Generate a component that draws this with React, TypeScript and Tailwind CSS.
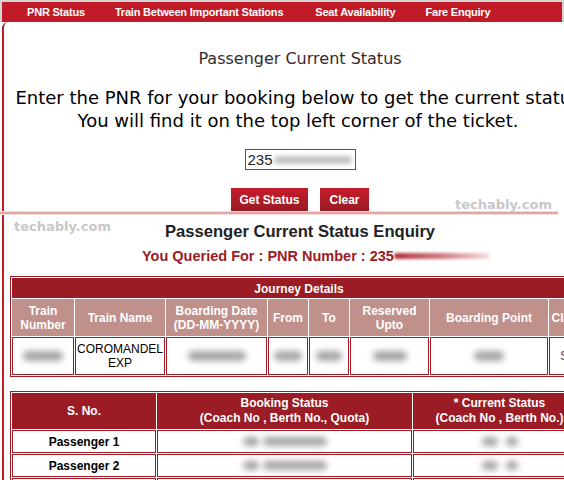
import React from "react";

const ARIAL = "font-['Liberation_Sans',Arial,sans-serif]";
const VERD = "font-['DejaVu_Sans',Verdana,sans-serif]";

function Blob({ w, h = "h-[10px]", c = "bg-[#a4a4a4]" }: { w: string; h?: string; c?: string }) {
  return <span className={`inline-block ${w} ${h} ${c} rounded-full blur-[3px]`} />;
}

function HeadCell({ w, children }: { w: string; children: React.ReactNode }) {
  return (
    <div className={`${w} shrink-0 bg-[#c0908b] text-white font-bold text-[12px] leading-[14px] flex items-center justify-center text-center`}>
      {children}
    </div>
  );
}

function DataCell({ w, children }: { w: string; children?: React.ReactNode }) {
  return (
    <div className={`${w} shrink-0 border border-[#9b1c24] bg-white flex items-center justify-center text-center text-[12px] leading-[14px] text-black`}>
      {children}
    </div>
  );
}

export default function App() {
  return (
    <div className={`w-[564px] h-[480px] overflow-hidden bg-white relative ${ARIAL}`}>
      <div className="w-[620px]">
        {/* top strip */}
        <div className="h-[2px] bg-[#d4d4d4]" />
        <div className="flex bg-[#d4d4d4]">
          <div className="w-[2px]" />
          <nav className="w-[560px] h-[20px] bg-[#c11b27] flex items-center text-white font-bold text-[11px] leading-none tracking-[-0.2px]">
            <span className="ml-[25px]">PNR Status</span>
            <span className="ml-[30px]">Train Between Important Stations</span>
            <span className="ml-[32px]">Seat Availability</span>
            <span className="ml-[30px]">Fare Enquiry</span>
          </nav>
          <div className="flex-1" />
        </div>

        {/* body */}
        <div className="ml-[2px] border-l-2 border-[#c11b27] rounded-tl-[6px] w-[594px]">
          {/* upper panel */}
          <div className={`h-[189px] flex flex-col items-center ${VERD}`}>
            <div className="mt-[27px] text-[16px] leading-[20px] text-[#352b2b]">
              Passenger Current Status
            </div>
            <div className="mt-[17px] -ml-[4px] text-[18px] leading-[23px] text-black text-center whitespace-nowrap">
              <div>Enter the PNR for your booking below to get the current status</div>
              <div>You will find it on the top left corner of the ticket.</div>
            </div>
            <div className={`mt-[17px] w-[111px] h-[22px] border border-[#555] flex items-center pl-[2px] ${ARIAL}`}>
              <span className="text-[15px] text-[#222] leading-none">235</span>
              <span className="inline-block w-[78px] h-[8px] bg-[#c4c4c4] rounded-full blur-[2px] ml-[1px]" />
            </div>
            <div className={`mt-[18px] flex gap-[12px] ${ARIAL}`}>
              <button className="w-[77px] h-[23px] bg-gradient-to-b from-[#c81a2a] to-[#961c25] text-white font-bold text-[12px]">
                Get Status
              </button>
              <button className="w-[49px] h-[23px] bg-gradient-to-b from-[#c81a2a] to-[#961c25] text-white font-bold text-[12px]">
                Clear
              </button>
            </div>
          </div>

          {/* divider */}
          <div className="h-[1px] bg-[#f3d9d9] -ml-[4px] w-[558px]" />
          <div className="h-[2px] bg-[#e4a4a4] -ml-[4px] w-[558px]" />
          <div className="h-[1px] bg-[#f5dede] -ml-[4px] w-[558px]" />

          {/* lower panel */}
          <div className="flex flex-col">
            <div className="mt-[6px] self-center text-[16.6px] leading-[21px] font-bold text-[#222]">
              Passenger Current Status Enquiry
            </div>
            <div className="mt-[5px] ml-[138px] text-[14.5px] leading-[18px] font-bold text-[#9b1c24] flex items-center">
              <span>You Queried For : PNR Number : 235</span>
              <span className="inline-block w-[96px] h-[6px] rounded-full bg-gradient-to-r from-[#b02a38] via-[#d07a80] to-[#f4e0e0] blur-[1.5px]" />
            </div>
          </div>

          {/* journey table */}
          <div className="ml-[6px] mt-[11px] w-[578px] border border-[#9b1c24] p-[1px] flex flex-col gap-[1px]">
            <div className="h-[20px] bg-[#9b1c24] text-white font-bold text-[12px] flex items-center justify-center pt-[2px]">
              Journey Details
            </div>
            <div className="h-[37px] flex gap-[1px]">
              <HeadCell w="w-[62px]">Train<br />Number</HeadCell>
              <HeadCell w="w-[90px]">Train Name</HeadCell>
              <HeadCell w="w-[101px]">Boarding Date<br />(DD-MM-YYYY)</HeadCell>
              <HeadCell w="w-[40px]">From</HeadCell>
              <HeadCell w="w-[40px]">To</HeadCell>
              <HeadCell w="w-[79px]">Reserved<br />Upto</HeadCell>
              <HeadCell w="w-[118px]">Boarding Point</HeadCell>
              <HeadCell w="w-[37px]">Class</HeadCell>
            </div>
            <div className="h-[38px] flex gap-[1px]">
              <DataCell w="w-[62px]"><Blob w="w-[40px]" /></DataCell>
              <DataCell w="w-[90px]">COROMANDEL<br />EXP</DataCell>
              <DataCell w="w-[101px]"><Blob w="w-[58px]" /></DataCell>
              <DataCell w="w-[40px]"><Blob w="w-[28px]" /></DataCell>
              <DataCell w="w-[40px]"><Blob w="w-[26px]" /></DataCell>
              <DataCell w="w-[79px]"><Blob w="w-[34px]" /></DataCell>
              <DataCell w="w-[118px]"><Blob w="w-[30px]" /></DataCell>
              <DataCell w="w-[37px]"><span className="text-[#8a2a20]">SL</span></DataCell>
            </div>
          </div>

          {/* passenger table */}
          <div className="ml-[6px] mt-[14px] w-[578px] border border-[#9b1c24] p-[1px] flex flex-col gap-[1px]">
            <div className="h-[36px] flex gap-[1px] text-white font-bold text-[12px] leading-[15px] text-center">
              <div className="w-[144px] shrink-0 bg-[#9b1c24] flex items-center justify-center">S. No.</div>
              <div className="w-[255px] shrink-0 bg-[#9b1c24] flex items-center justify-center">
                Booking Status<br />(Coach No , Berth No., Quota)
              </div>
              <div className="flex-1 bg-[#9b1c24] flex items-center justify-center">
                * Current Status<br />(Coach No , Berth No.)
              </div>
            </div>
            {["Passenger 1", "Passenger 2", "Passenger 3"].map((p) => (
              <div key={p} className="h-[23px] flex gap-[1px]">
                <div className="w-[144px] shrink-0 border border-[#9b1c24] flex items-center justify-center font-bold text-[12px] text-black">
                  {p}
                </div>
                <div className="w-[255px] shrink-0 border border-[#9b1c24] flex items-center justify-center gap-[4px]">
                  <Blob w="w-[16px]" h="h-[9px]" />
                  <Blob w="w-[64px]" h="h-[9px]" />
                </div>
                <div className="flex-1 border border-[#9b1c24] flex items-center justify-center gap-[8px]">
                  <Blob w="w-[16px]" h="h-[9px]" />
                  <Blob w="w-[12px]" h="h-[9px]" />
                </div>
              </div>
            ))}
          </div>
        </div>
      </div>

      {/* watermarks */}
      <div className={`absolute left-[455px] top-[196px] text-[13px] leading-[18px] font-bold text-[#c8c8c8] ${VERD}`}>
        techably.com
      </div>
      <div className={`absolute left-[14px] top-[218px] text-[13px] leading-[18px] font-bold text-[#c8c8c8] ${VERD}`}>
        techably.com
      </div>
    </div>
  );
}
